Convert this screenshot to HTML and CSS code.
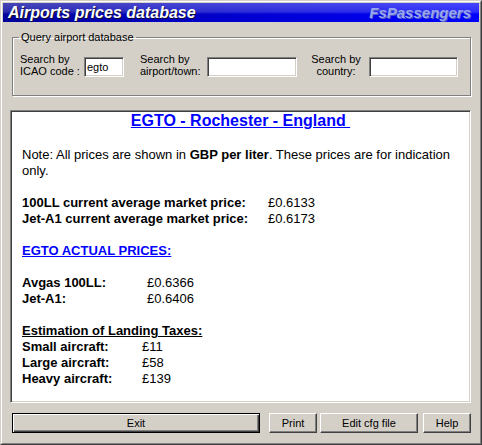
FILE: index.html
```html
<!DOCTYPE html>
<html>
<head>
<meta charset="utf-8">
<link rel="stylesheet" href="styles.css">
</head>
<body>
<div class="window">
  <div class="frame">
    <div class="titlebar">
      <span class="title">Airports prices database</span>
      <span class="brand">FsPassengers</span>
    </div>
    <fieldset class="group">
      <legend>Query airport database</legend>
      <div class="query">
        <label class="lbl lbl-icao">Search by<br>ICAO code :</label>
        <input class="field f-icao" type="text" value="egto">
        <label class="lbl lbl-town">Search by<br>airport/town:</label>
        <input class="field f-town" type="text" value="">
        <label class="lbl lbl-country">Search by<br>country:</label>
        <input class="field f-country" type="text" value="">
      </div>
    </fieldset>
    <div class="panel">
      <h1 class="heading">EGTO - Rochester - England&nbsp;</h1>
      <p class="note">Note: All prices are shown in <b>GBP per liter</b>. These prices are for indication<br>only.</p>
      <div class="grid grid-market">
        <b>100LL current average market price:</b><span>£0.6133</span>
        <b>Jet-A1 current average market price:</b><span>£0.6173</span>
      </div>
      <div class="section-link">EGTO ACTUAL PRICES:</div>
      <div class="grid grid-actual">
        <b>Avgas 100LL:</b><span>£0.6366</span>
        <b>Jet-A1:</b><span>£0.6406</span>
      </div>
      <div class="section-title">Estimation of Landing Taxes:</div>
      <div class="grid grid-taxes">
        <b>Small aircraft:</b><span>£11</span>
        <b>Large aircraft:</b><span>£58</span>
        <b>Heavy aircraft:</b><span>£139</span>
      </div>
    </div>
    <div class="buttons">
      <button class="btn btn-default btn-exit">Exit</button>
      <button class="btn btn-print">Print</button>
      <button class="btn btn-edit">Edit cfg file</button>
      <button class="btn btn-help">Help</button>
    </div>
  </div>
</div>
</body>
</html>
```
FILE: styles.css
```css
html, body {
  margin: 0;
  padding: 0;
  background: #d4d0c8;
}
.window {
  width: 482px;
  height: 445px;
  box-sizing: border-box;
  border: 1px solid;
  border-color: #d4d0c8 #404040 #404040 #d4d0c8;
  background: #d4d0c8;
  font-family: "Liberation Sans", Arial, sans-serif;
}
.frame {
  height: 100%;
  box-sizing: border-box;
  border: 1px solid;
  border-color: #ffffff #808080 #808080 #ffffff;
  padding: 1px;
  display: flex;
  flex-direction: column;
}
.titlebar {
  height: 19px;
  flex: none;
  display: flex;
  align-items: center;
  justify-content: space-between;
  padding: 0 8px 0 5px;
  background:
    linear-gradient(to bottom, rgba(255,255,255,0.28) 0, rgba(255,255,255,0.18) 45%, rgba(255,255,255,0) 60%),
    linear-gradient(to right, #00009a 0%, #0000d0 50%, #0000ff 100%);
}
.title {
  color: #ffffff;
  font-weight: bold;
  font-style: italic;
  font-size: 16px;
  line-height: 19px;
  text-shadow: 1px 1px 0 #101030;
}
.brand {
  color: #9aa6f2;
  font-weight: bold;
  font-style: italic;
  font-size: 15px;
  line-height: 19px;
  text-shadow: 1px 1px 0 #5060c0;
}
.group {
  margin: 9px 8px 0 9px;
  padding: 0 0 18px 0;
  height: 65px;
  box-sizing: border-box;
  border: 1px solid #808080;
  box-shadow: 1px 1px 0 #ffffff, inset 1px 1px 0 #ffffff;
  flex: none;
  min-width: 0;
}
.group legend {
  font-size: 11px;
  line-height: 13px;
  margin-left: 6px;
  padding: 0 2px;
  color: #000;
}
.query {
  display: flex;
  align-items: flex-end;
  padding: 9px 0 0 7px;
}
.lbl {
  font-size: 11px;
  line-height: 12px;
  color: #000;
  flex: none;
  white-space: nowrap;
}
.lbl-icao { width: 64px; }
.lbl-town { width: 67px; margin-left: 16px; }
.lbl-country { width: 54px; margin-left: 12px; margin-right: 6px; text-align: center; }
.field {
  box-sizing: border-box;
  height: 20px;
  margin: 0;
  padding: 0 2px;
  border: 1px solid;
  border-color: #808080 #ffffff #ffffff #808080;
  box-shadow: inset 1px 1px 0 #404040, inset -1px -1px 0 #d4d0c8;
  background: #fff;
  font-family: "Liberation Sans", Arial, sans-serif;
  font-size: 11px;
  color: #000;
  outline: none;
  flex: none;
}
.f-icao { width: 40px; }
.f-town { width: 90px; }
.f-country { width: 89px; }
.panel {
  margin: 14px 8px 0 7px;
  height: 293px;
  box-sizing: border-box;
  flex: none;
  border: 1px solid;
  border-color: #808080 #ffffff #ffffff #808080;
  box-shadow: inset 1px 1px 0 #404040, inset -1px -1px 0 #d4d0c8;
  background: #ffffff;
  padding: 1px 11px;
  font-size: 13px;
  line-height: 16px;
  color: #000;
}
.heading {
  margin: 0;
  text-align: center;
  font-size: 16px;
  line-height: 18px;
  font-weight: bold;
  color: #0000ff;
  text-decoration: underline;
}
.note {
  margin: 17px 0 0 0;
  white-space: nowrap;
}
.grid {
  display: grid;
  margin-top: 16px;
}
.grid-market { grid-template-columns: 246px auto; }
.grid-actual { grid-template-columns: 125px auto; }
.grid-taxes { grid-template-columns: 120px auto; margin-top: 0; }
.section-link {
  margin-top: 16px;
  font-weight: bold;
  color: #0000ff;
  text-decoration: underline;
}
.section-title {
  margin-top: 16px;
  font-weight: bold;
  text-decoration: underline;
}
.buttons {
  display: flex;
  margin: 10px 0 0 9px;
  flex: none;
}
.btn {
  box-sizing: border-box;
  height: 20px;
  margin: 0;
  padding: 0;
  border: 1px solid;
  border-color: #ffffff #404040 #404040 #ffffff;
  box-shadow: inset -1px -1px 0 #808080;
  background: #d4d0c8;
  font-family: "Liberation Sans", Arial, sans-serif;
  font-size: 11px;
  color: #000;
}
.btn-default {
  border: 1px solid #000;
  box-shadow: inset 1px 1px 0 #ffffff, inset -1px -1px 0 #404040, inset -2px -2px 0 #808080;
}
.btn-exit { width: 248px; }
.btn-print { width: 48px; margin-left: 9px; }
.btn-edit { width: 98px; margin-left: 3px; }
.btn-help { width: 48px; margin-left: 5px; }
```
